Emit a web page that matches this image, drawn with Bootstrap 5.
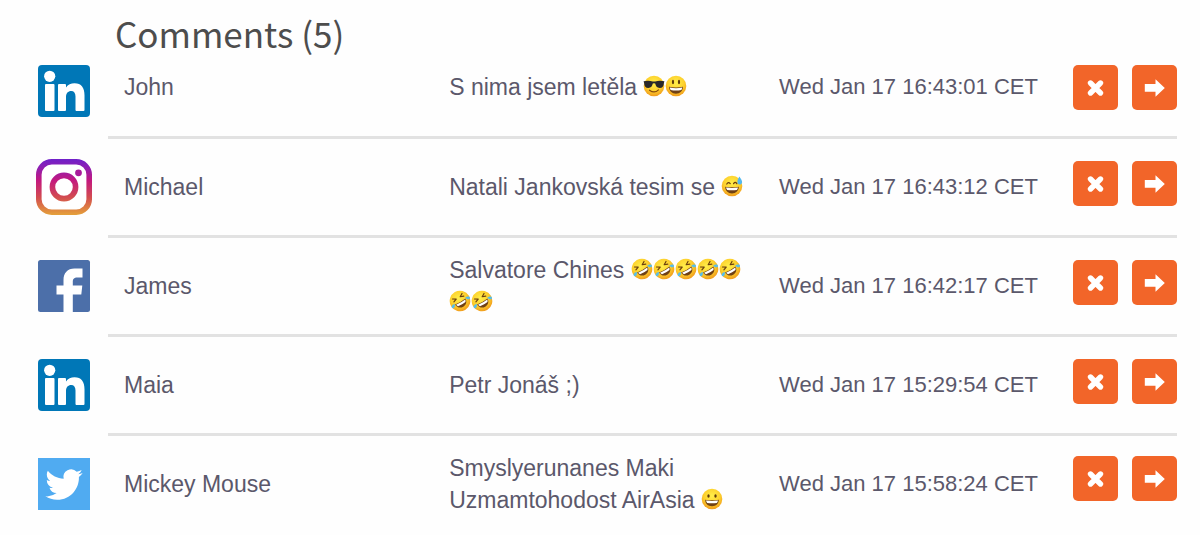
<!DOCTYPE html>
<html lang="en">
<head>
<meta charset="utf-8">
<meta name="viewport" content="width=device-width, initial-scale=1">
<title>Comments</title>
<link href="https://cdn.jsdelivr.net/npm/bootstrap@5.3.0/dist/css/bootstrap.min.css" rel="stylesheet">
<style>
  body { background: #fefefe; color: #5b586b; font-family: "Liberation Sans", Arial, sans-serif; font-size: 23px; line-height: 32px; }
  .comments-panel { padding: 14px 23px 0 36px; }
  .comments-title { margin: 0 0 3px; padding-left: 79px; font-family: "Noto Sans CJK SC", sans-serif; font-size: 35px; line-height: 37px; font-weight: 400; color: #4d4d4d; }
  .comments-list { table-layout: fixed; border-collapse: separate; border-spacing: 0; }
  .comments-list td { height: 99px; padding: 0 16px; border-bottom: 3px solid #e2e2e2; vertical-align: middle; }
  .comments-list .cell-network { padding: 0 16px 0 0; border-bottom-color: transparent; text-align: center; }
  .comments-list .cell-time { padding: 0 15px; font-size: 22px; white-space: nowrap; }
  .comments-list .cell-actions { padding: 22px 0 0; vertical-align: top; }
  .comments-list tr:first-child td { height: 85px; padding-bottom: 17px; }
  .comments-list tr:first-child .cell-network { padding-bottom: 8px; }
  .comments-list tr:first-child .cell-actions { padding: 11px 0 0; }
  .comments-list tr:last-child td { height: 96px; border-bottom: 0; }
  .comments-list tr:last-child .cell-actions { padding-top: 20px; }
  .col-network { width: 72px; }
  .col-name { width: 28.5%; }
  .col-comment { width: 29%; }
  .col-actions { width: 120px; }
  .network { width: 54px; height: 54px; display: inline-block; vertical-align: middle; }
  .network-lg { width: 56px; height: 56px; }
  .emoji { width: 22px; height: 22px; vertical-align: -2px; }
  .cell-buttons { gap: 14px; }
  .btn-action { width: 45px; height: 45px; padding: 0; border: 0; border-radius: 5px; background: #f26529; }
  .btn-action:hover, .btn-action:focus-visible { background: #d9541b; }
  .btn-action svg { width: 45px; height: 45px; display: block; }
</style>
</head>
<body>
<svg width="0" height="0" class="position-absolute" aria-hidden="true">
  <defs>
    <radialGradient id="face" cx="50%" cy="35%" r="65%"><stop offset="0" stop-color="#ffee4a"/><stop offset=".6" stop-color="#fdd02c"/><stop offset="1" stop-color="#f09a1c"/></radialGradient>
    <linearGradient id="insta" x1="0" y1="0" x2="0" y2="56" gradientUnits="userSpaceOnUse"><stop offset="0" stop-color="#6f20c9"/><stop offset=".14" stop-color="#8b1fb5"/><stop offset=".38" stop-color="#c3187f"/><stop offset=".68" stop-color="#d24b50"/><stop offset="1" stop-color="#e5a13a"/></linearGradient>
    <symbol id="linkedin" viewBox="0 0 54 54">
      <rect x="1" y="1" width="52" height="52" rx="4" fill="#0077b7"/>
      <circle cx="12.700" cy="12.300" r="5.600" fill="#fff"/>
      <path fill="#fff" d="M9 20h7.500q1 0 1 1v25q0 1-1 1H9q-1 0-1-1V21q0-1 1-1zM22 20h6q1 0 1 1v2.500c2-3 5-4.200 8.500-4.200 7 0 10 4.500 10 12V46q0 1-1 1h-7q-1 0-1-1V32.500c0-3.500-1.500-5.500-4.300-5.500-3.200 0-5.200 2.200-5.200 6v13q0 1-1 1H22q-1 0-1-1V21q0-1 1-1z"/>
    </symbol>
    <symbol id="instagram" viewBox="0 0 56 56">
      <rect x="2.800" y="2.800" width="50.400" height="50.400" rx="13" fill="#fff" stroke="url(#insta)" stroke-width="5.600"/>
      <circle cx="28" cy="28" r="11.600" fill="none" stroke="url(#insta)" stroke-width="5.600"/>
      <circle cx="42.500" cy="13.800" r="3.400" fill="#a91a9b"/>
    </symbol>
    <symbol id="facebook" viewBox="0 0 54 54">
      <rect x="1" y="1" width="52" height="52" rx="2.500" fill="#4c6fa9"/>
      <path fill="#fff" d="M26.500 53V35.500H19.500v-9h7v-5.500c0-7 4-11.500 11-11.500H45.500v9h-5c-3.700 0-4.700 1.500-4.700 4.500v3.500h9.500l-1 9h-8.500V53z"/>
    </symbol>
    <symbol id="twitter" viewBox="0 0 54 54">
      <rect x="1" y="1" width="52" height="52" fill="#50abf1"/>
      <path fill="#fff" transform="translate(8.300 8.800) scale(1.560)" d="M23.950 4.570a10 10 0 0 1-2.820.780 4.960 4.960 0 0 0 2.160-2.730c-.95.560-2 .96-3.130 1.190a4.920 4.920 0 0 0-8.380 4.480C7.690 8.100 4.070 6.130 1.640 3.160a4.820 4.820 0 0 0-.67 2.480c0 1.710.87 3.210 2.190 4.100a4.900 4.900 0 0 1-2.230-.62v.06a4.920 4.920 0 0 0 3.950 4.830 5 5 0 0 1-2.210.080 4.940 4.940 0 0 0 4.600 3.420A9.870 9.870 0 0 1 0 19.540a14 14 0 0 0 7.550 2.210c9.050 0 14-7.500 14-13.980 0-.21 0-.42-.02-.63a9.940 9.940 0 0 0 2.420-2.570z"/>
    </symbol>
    <symbol id="cross" viewBox="0 0 45 45"><path d="M17.500 18l10 10M27.500 18l-10 10" stroke="#fff" stroke-width="5.400" stroke-linecap="round"/></symbol>
    <symbol id="arrow" viewBox="0 0 45 45"><path fill="#fff" d="M12.800 19.100h10.700v-4.900l9.300 8.800-9.300 8.800v-5H12.800z"/></symbol>
    <symbol id="cool" viewBox="0 0 22 22">
      <circle cx="11" cy="11" r="10.300" fill="url(#face)"/>
      <path fill="#29282a" d="M.6 6.200q5-1.200 9.200.3h2.400q4.200-1.500 9.200-.3l-.5 1.800c-.3 3.500-1.500 4.900-4.200 4.900-2.900 0-3.800-1.700-4.500-4.300q-1.200-.8-2.400 0c-.7 2.600-1.600 4.300-4.500 4.300-2.700 0-3.900-1.400-4.200-4.900z"/>
      <path fill="none" stroke="#8a4a0c" stroke-width="1.200" stroke-linecap="round" d="M6.500 15.200q5 3.600 9-.4"/>
    </symbol>
    <symbol id="smiley" viewBox="0 0 22 22">
      <circle cx="11" cy="11" r="10.300" fill="url(#face)"/>
      <ellipse cx="8" cy="7" rx="1.100" ry="2.200" fill="#5f3a0c"/><ellipse cx="14" cy="7" rx="1.100" ry="2.200" fill="#5f3a0c"/>
      <path fill="#704014" d="M4 11.800q7 1.600 14 0c0 4-3 7-7 7s-7-3-7-7z"/>
      <path fill="#fff" d="M4.700 12.600q6.300 1.300 12.600 0-.3 1.600-1 2.400-5.300 1-10.600 0-.8-1-1-2.400z"/>
    </symbol>
    <symbol id="grin" viewBox="0 0 22 22">
      <circle cx="11" cy="11" r="10.300" fill="url(#face)"/>
      <ellipse cx="7.500" cy="8" rx="1.200" ry="1.700" fill="#5f3a0c"/><ellipse cx="14.500" cy="8" rx="1.200" ry="1.700" fill="#5f3a0c"/>
      <path fill="#704014" d="M4.200 11.800q6.800 1 13.600 0c0 4-2.800 6.400-6.800 6.400s-6.800-2.400-6.800-6.400z"/>
      <path fill="#fff" d="M5 12.600q6 .9 12 0-.3 1.700-1.200 2.400-4.800.7-9.600 0Q5.300 14 5 12.600z"/>
    </symbol>
    <symbol id="sweat" viewBox="0 0 22 22">
      <circle cx="11" cy="11" r="10.300" fill="url(#face)"/>
      <path fill="none" stroke="#6b3f0e" stroke-width="1.300" stroke-linecap="round" d="M5.800 9q1.600-2.600 3.400-.4M12.600 8.600q1.600-2.400 3.200 0"/>
      <path fill="#704014" d="M4.200 11.800q6.800 1 13.600 0c0 4-2.800 6.600-6.800 6.600s-6.800-2.600-6.800-6.600z"/>
      <path fill="#fff" d="M5 12.600q6 .9 12 0-.3 1.700-1.200 2.400-4.800.7-9.600 0Q5.300 14 5 12.600z"/>
      <path fill="#55b9ee" d="M18.300 1.500c1.800 2.300 3 4.300 2.800 6-.2 1.400-1.300 2.100-2.500 2-1.500-.1-2.300-1.300-2.200-2.800.1-1.600.9-3.300 1.900-5.200z"/>
    </symbol>
    <symbol id="rofl" viewBox="0 0 22 22">
      <g transform="rotate(-30 11 11)">
        <circle cx="11" cy="11" r="10.300" fill="url(#face)"/>
        <path fill="none" stroke="#6b3f0e" stroke-width="1.200" stroke-linecap="round" stroke-linejoin="round" d="M5.500 5.500l3.200 1.900-3.400 1.300M16.500 5.500l-3.200 1.900 3.400 1.300"/>
        <path fill="#704014" d="M5 11.500q6 1 12 0c0 3.600-2.500 6-6 6s-6-2.400-6-6z"/>
        <path fill="#fff" d="M5.700 12.300q5.300.8 10.600 0-.3 1.600-1 2.200-4.300.7-8.600 0-.8-1-1-2.200z"/>
        <path fill="#58bde9" d="M5 10.800c-2.200-.3-4 .2-4.400 1.500-.2 1.200.7 1.900 1.800 1.600 1.500-.4 2-1.500 2.600-3.100zM17 10.800c2.200-.3 4 .2 4.400 1.500.2 1.200-.7 1.900-1.800 1.600-1.500-.4-2-1.500-2.600-3.100z"/>
      </g>
    </symbol>
  </defs>
</svg>

<main class="container-fluid comments-panel">
  <h1 class="comments-title">Comments (5)</h1>
  <table class="comments-list w-100">
    <colgroup><col class="col-network"><col class="col-name"><col class="col-comment"><col><col class="col-actions"></colgroup>
    <tbody>
      <tr>
        <td class="cell-network"><svg class="network" role="img" aria-label="LinkedIn"><use href="#linkedin"/></svg></td>
        <td>John</td>
        <td>S nima jsem letěla <svg class="emoji" role="img" aria-label="😎"><use href="#cool"/></svg><svg class="emoji" role="img" aria-label="😃"><use href="#smiley"/></svg></td>
        <td class="cell-time">Wed Jan 17 16:43:01 CET</td>
        <td class="cell-actions"><div class="d-flex justify-content-end cell-buttons"><button type="button" class="btn btn-action" aria-label="Delete"><svg><use href="#cross"/></svg></button><button type="button" class="btn btn-action" aria-label="Open"><svg><use href="#arrow"/></svg></button></div></td>
      </tr>
      <tr>
        <td class="cell-network"><svg class="network network-lg" role="img" aria-label="Instagram"><use href="#instagram"/></svg></td>
        <td>Michael</td>
        <td>Natali Jankovská tesim se <svg class="emoji" role="img" aria-label="😅"><use href="#sweat"/></svg></td>
        <td class="cell-time">Wed Jan 17 16:43:12 CET</td>
        <td class="cell-actions"><div class="d-flex justify-content-end cell-buttons"><button type="button" class="btn btn-action" aria-label="Delete"><svg><use href="#cross"/></svg></button><button type="button" class="btn btn-action" aria-label="Open"><svg><use href="#arrow"/></svg></button></div></td>
      </tr>
      <tr>
        <td class="cell-network"><svg class="network" role="img" aria-label="Facebook"><use href="#facebook"/></svg></td>
        <td>James</td>
        <td>Salvatore Chines <svg class="emoji" role="img" aria-label="🤣"><use href="#rofl"/></svg><svg class="emoji" role="img" aria-label="🤣"><use href="#rofl"/></svg><svg class="emoji" role="img" aria-label="🤣"><use href="#rofl"/></svg><svg class="emoji" role="img" aria-label="🤣"><use href="#rofl"/></svg><svg class="emoji" role="img" aria-label="🤣"><use href="#rofl"/></svg><svg class="emoji" role="img" aria-label="🤣"><use href="#rofl"/></svg><svg class="emoji" role="img" aria-label="🤣"><use href="#rofl"/></svg></td>
        <td class="cell-time">Wed Jan 17 16:42:17 CET</td>
        <td class="cell-actions"><div class="d-flex justify-content-end cell-buttons"><button type="button" class="btn btn-action" aria-label="Delete"><svg><use href="#cross"/></svg></button><button type="button" class="btn btn-action" aria-label="Open"><svg><use href="#arrow"/></svg></button></div></td>
      </tr>
      <tr>
        <td class="cell-network"><svg class="network" role="img" aria-label="LinkedIn"><use href="#linkedin"/></svg></td>
        <td>Maia</td>
        <td>Petr Jonáš ;)</td>
        <td class="cell-time">Wed Jan 17 15:29:54 CET</td>
        <td class="cell-actions"><div class="d-flex justify-content-end cell-buttons"><button type="button" class="btn btn-action" aria-label="Delete"><svg><use href="#cross"/></svg></button><button type="button" class="btn btn-action" aria-label="Open"><svg><use href="#arrow"/></svg></button></div></td>
      </tr>
      <tr>
        <td class="cell-network"><svg class="network" role="img" aria-label="Twitter"><use href="#twitter"/></svg></td>
        <td>Mickey Mouse</td>
        <td>Smyslyerunanes Maki Uzmamtohodost AirAsia <svg class="emoji" role="img" aria-label="😀"><use href="#grin"/></svg></td>
        <td class="cell-time">Wed Jan 17 15:58:24 CET</td>
        <td class="cell-actions"><div class="d-flex justify-content-end cell-buttons"><button type="button" class="btn btn-action" aria-label="Delete"><svg><use href="#cross"/></svg></button><button type="button" class="btn btn-action" aria-label="Open"><svg><use href="#arrow"/></svg></button></div></td>
      </tr>
    </tbody>
  </table>
</main>
<script src="https://cdn.jsdelivr.net/npm/bootstrap@5.3.0/dist/js/bootstrap.bundle.min.js"></script>
</body>
</html>
